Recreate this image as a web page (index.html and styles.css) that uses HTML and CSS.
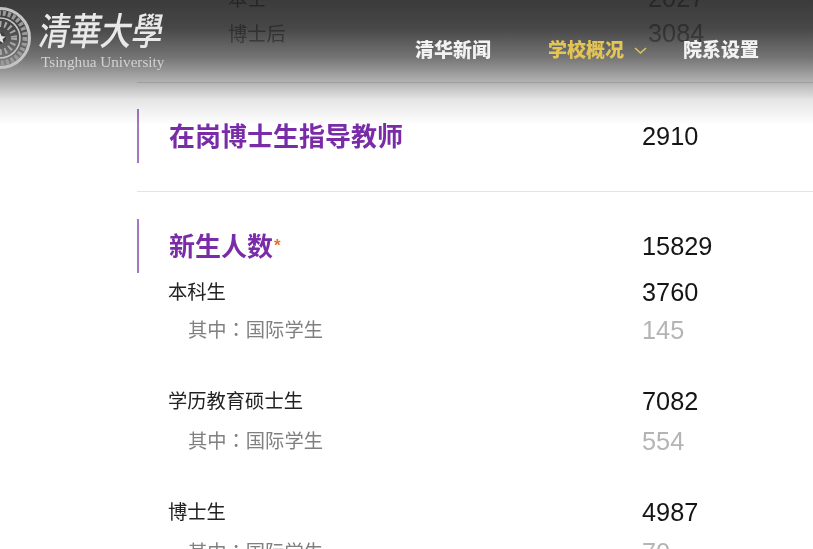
FILE: index.html
```html
<!DOCTYPE html>
<html lang="zh-CN">
<head>
  <meta charset="UTF-8">
  <meta name="viewport" content="width=device-width, initial-scale=1.0">
  <title>学校概况</title>
  <link rel="stylesheet" href="styles.css">
</head>
<body>
  <header class="site-header">
    <div class="logo">
      <svg class="seal" width="64" height="64" viewBox="0 0 64 64" aria-hidden="true">
        <circle cx="32" cy="32" r="29.5" fill="none" stroke="#c4c4c4" stroke-width="3"/>
        <circle cx="32" cy="32" r="25" fill="none" stroke="#9a9a9a" stroke-width="5" stroke-dasharray="3 2"/>
        <circle cx="32" cy="32" r="20" fill="none" stroke="#c8c8c8" stroke-width="1.5"/>
        <circle cx="32" cy="32" r="14" fill="none" stroke="#a8a8a8" stroke-width="6" stroke-dasharray="2 3"/>
        <circle cx="32" cy="32" r="6" fill="#3f3f3f"/>
        <path d="M32 26.5l1.6 3.8 4 .3-3 2.6 1 4-3.6-2.2-3.6 2.2 1-4-3-2.6 4-.3z" fill="#e4e4e4"/>
      </svg>
      <div class="logo-text">
        <div class="logo-cn">清華大學</div>
        <div class="logo-en">Tsinghua University</div>
      </div>
    </div>
    <nav class="nav">
      <a class="nav-item" href="#">清华新闻</a>
      <a class="nav-item active" href="#">学校概况
        <svg class="chevron" width="13" height="8" viewBox="0 0 13 8" aria-hidden="true"><path d="M1 1l5.5 5L12 1" fill="none" stroke="#e3c455" stroke-width="1.5"/></svg>
      </a>
      <a class="nav-item" href="#">院系设置</a>
    </nav>
  </header>

  <main class="content">
    <section class="block block-top">
      <div class="row row-old"><span class="label">本士</span><span class="num">2027</span></div>
      <div class="row row-old"><span class="label">博士后</span><span class="num">3084</span></div>
    </section>

    <section class="block">
      <div class="heading-row">
        <h2 class="heading">在岗博士生指导教师</h2>
        <span class="num">2910</span>
      </div>
    </section>

    <section class="block block-last">
      <div class="heading-row">
        <h2 class="heading">新生人数<span class="star">*</span></h2>
        <span class="num">15829</span>
      </div>
      <div class="group">
        <div class="row"><span class="label">本科生</span><span class="num">3760</span></div>
        <div class="row sub"><span class="label" lang="zh-TW">其中：国际学生</span><span class="num">145</span></div>
      </div>
      <div class="group">
        <div class="row"><span class="label">学历教育硕士生</span><span class="num">7082</span></div>
        <div class="row sub"><span class="label" lang="zh-TW">其中：国际学生</span><span class="num">554</span></div>
      </div>
      <div class="group">
        <div class="row"><span class="label">博士生</span><span class="num">4987</span></div>
        <div class="row sub"><span class="label" lang="zh-TW">其中：国际学生</span><span class="num">70</span></div>
      </div>
    </section>
  </main>
</body>
</html>
```

FILE: styles.css
```css
html, body {
  height: 549px;
  overflow: hidden;
}
body {
  margin: 0;
  padding: 0;
  background-color: #fff;
  color: #222;
  font-family: "Liberation Sans", "Noto Sans CJK TC", sans-serif;
}
.site-header {
  position: absolute;
  top: 0;
  left: 0;
  right: 0;
  z-index: 2;
  height: 126px;
  background: linear-gradient(to bottom,
    rgba(0, 0, 0, 0.77) 0,
    rgba(0, 0, 0, 0.72) 28px,
    rgba(0, 0, 0, 0.54) 58px,
    rgba(0, 0, 0, 0.3) 82px,
    rgba(0, 0, 0, 0.1) 100px,
    rgba(0, 0, 0, 0) 126px);
}
.logo {
  position: absolute;
  top: 6px;
  left: -32px;
  display: flex;
  gap: 8px;
  filter: blur(0.5px);
}
.seal {
  display: block;
}
.logo-text {
  padding-top: 1px;
}
.logo-cn {
  font-family: "Noto Sans CJK TC", sans-serif;
  font-size: 31px;
  font-weight: 500;
  line-height: 44px;
  white-space: nowrap;
  color: #e8e8e8;
  transform: skewX(-10deg) scaleY(1.22);
}
.logo-en {
  margin-top: 3px;
  margin-left: 1px;
  font-family: "Liberation Serif", serif;
  font-size: 15.2px;
  line-height: 16px;
  white-space: nowrap;
  color: #d2d2d2;
}
.nav {
  position: absolute;
  top: 38px;
  left: 415px;
  display: flex;
  filter: blur(0.3px);
}
.nav-item {
  font-family: "Noto Sans CJK SC", sans-serif;
  font-size: 19px;
  font-weight: 900;
  line-height: 22px;
  color: #f2f2f2;
  text-decoration: none;
  white-space: nowrap;
}
.nav-item + .nav-item {
  margin-left: 57px;
}
.nav-item.active {
  width: 135px;
  color: #e3c455;
}
.nav-item.active + .nav-item {
  margin-left: 0;
}
.chevron {
  margin-left: 6px;
  vertical-align: 2px;
}

.content {
  margin-top: -20px;
  margin-left: 137px;
  filter: blur(0.3px);
}
.block {
  padding: 27px 0 28px;
  border-bottom: 1px solid #e4e4e4;
}
.block-top {
  padding: 0 0 32px;
  border-bottom-color: #e0e0e0;
}
.block-top + .block {
  padding-top: 26px;
}
.block-last {
  border-bottom: none;
}
.heading-row {
  display: flex;
  align-items: center;
  height: 54px;
  padding-left: 30px;
  border-left: 2px solid #a874c4;
}
.heading {
  width: 473px;
  margin: 0;
  padding-bottom: 4px;
  font-size: 26px;
  font-weight: 700;
  color: #7a2ca8;
}
.star {
  position: relative;
  top: -5px;
  margin-left: 1px;
  font-size: 17px;
  font-weight: 700;
  color: #e8702a;
}
.row {
  display: flex;
  align-items: center;
  height: 38px;
  padding-left: 31px;
}
.label {
  width: 474px;
  padding-bottom: 3px;
  font-size: 19.3px;
  color: #222;
}
.num {
  font-size: 25.3px;
  color: #151515;
}
.row-old {
  height: 35px;
  padding-left: 91px;
}
.row-old .label {
  width: 420px;
  padding-bottom: 0;
  color: #a0a0a0;
}
.row-old .num {
  padding-top: 2px;
  color: #a8a8a8;
}
.group {
  margin-bottom: 33px;
}
.sub .label {
  width: 454px;
  padding-left: 20px;
  color: #808080;
}
.sub .num {
  color: #b4b4b4;
}
.group + .group .sub {
  margin-top: 2px;
}
```
